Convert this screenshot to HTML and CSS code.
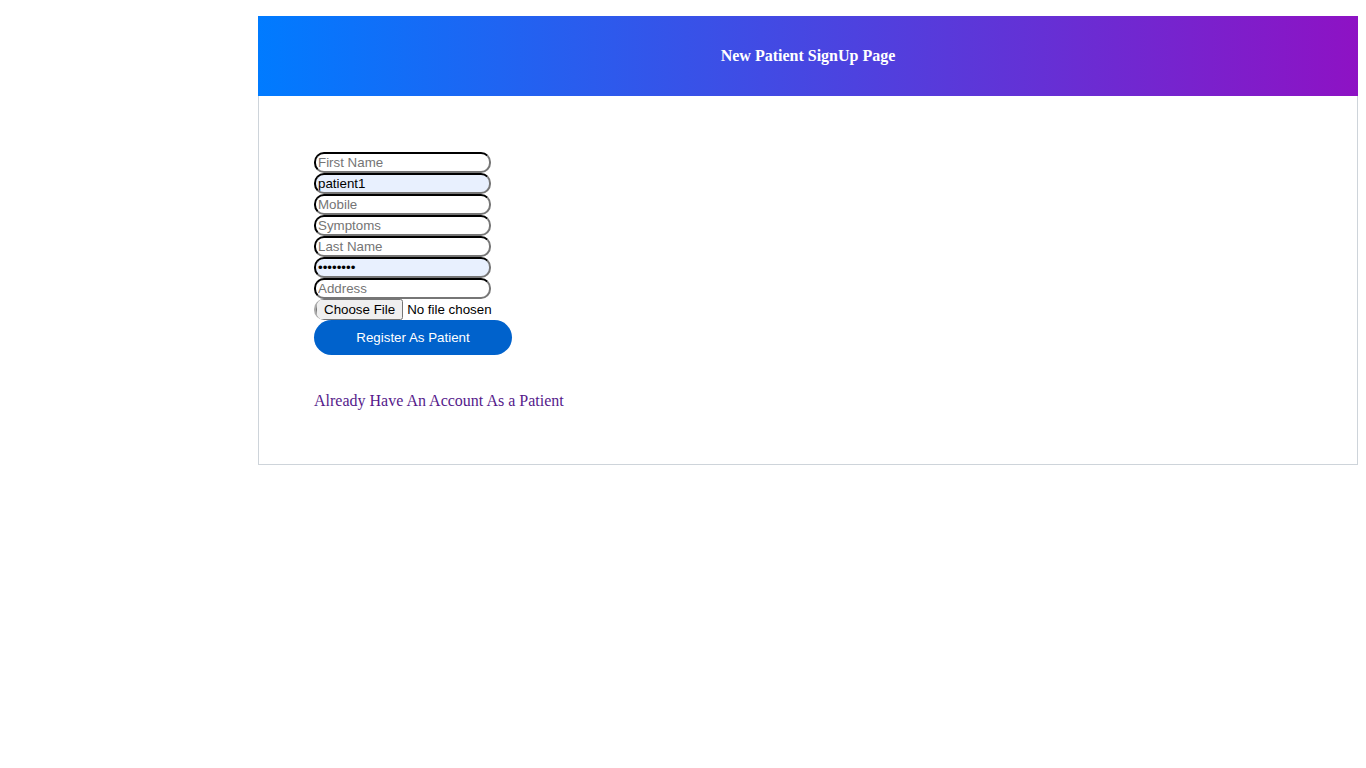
FILE: index.html
```html
<!DOCTYPE html>
<html>
<head>
<meta charset="utf-8">
<title>New Patient SignUp</title>
<link rel="stylesheet" href="styles.css">
</head>
<body>
<div class="card">
  <div class="card-header">
    <h5 class="title">New Patient SignUp Page</h5>
  </div>
  <div class="card-body">
    <form class="form">
      <input class="field" type="text" placeholder="First Name">
      <input class="field filled" type="text" value="patient1">
      <input class="field" type="text" placeholder="Mobile">
      <input class="field" type="text" placeholder="Symptoms">
      <input class="field" type="text" placeholder="Last Name">
      <input class="field filled" type="password" value="patient1">
      <input class="field" type="text" placeholder="Address">
      <input class="file" type="file">
      <button class="btn" type="button">Register As Patient</button>
    </form>
    <a class="link" href="#">Already Have An Account As a Patient</a>
  </div>
</div>
</body>
</html>
```
FILE: styles.css
```css
html, body {
  margin: 0;
  padding: 0;
  background: #fff;
}
body {
  padding: 8px;
  font-family: "Liberation Serif", "Times New Roman", serif;
}
.card {
  margin: 8px 0 0 250px;
  width: 1100px;
  box-sizing: border-box;
  border: 1px solid #ced4da;
  border-top: none;
}
.card-header {
  height: 80px;
  margin: 0 -1px;
  background: linear-gradient(to right, #007bff, #8e12c4);
  display: flex;
  align-items: center;
  justify-content: center;
}
.title {
  margin: 0;
  color: #fff;
  font-family: "Liberation Serif", "Times New Roman", serif;
  font-weight: bold;
  font-size: 16px;
}
.card-body {
  padding: 55px 55px 55px 55px;
  margin-top: 1px;
}
.form {
  display: flex;
  flex-direction: column;
  align-items: flex-start;
}
.field {
  box-sizing: border-box;
  width: 177px;
  height: 21px;
  margin: 0;
  padding: 1px 2px;
  border: 2px inset #767676;
  border-color: #1f1f1f #767676 #767676 #1f1f1f;
  border-radius: 10px;
  font-family: "Liberation Sans", Arial, sans-serif;
  font-size: 13.333px;
  color: #000;
  background: #fff;
  outline: none;
}
.field::placeholder {
  color: #757575;
}
.field.filled {
  background: #e8f0fe;
}
.file {
  margin: 0;
  height: 21px;
  font-family: "Liberation Sans", Arial, sans-serif;
  font-size: 13.333px;
  border-left: 2px solid #aaa;
  border-radius: 10px;
}
.btn {
  width: 198px;
  height: 35px;
  margin: 0;
  border: none;
  border-radius: 18px;
  background: #0062cc;
  color: #fff;
  font-family: "Liberation Sans", Arial, sans-serif;
  font-size: 13.333px;
}
.link {
  display: block;
  margin-top: 37px;
  margin-bottom: -1px;
  color: #551a8b;
  text-decoration: none;
  font-size: 16px;
  line-height: 18px;
}
```
